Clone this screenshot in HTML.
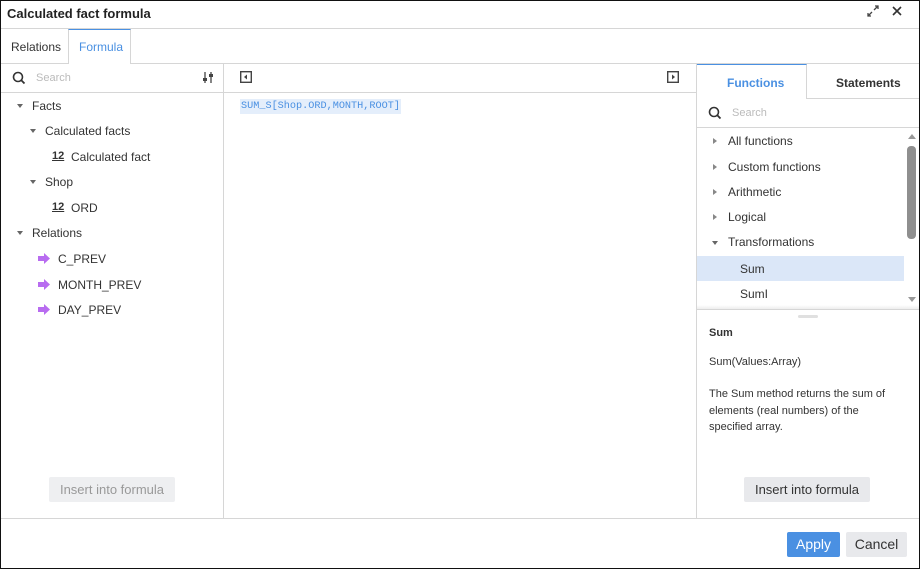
<!DOCTYPE html><html><head><style>
*{box-sizing:border-box;margin:0;padding:0}
body{width:920px;height:569px;font-family:"Liberation Sans",sans-serif;font-size:12px;color:#333;background:#fff;position:relative;overflow:hidden}
.a{position:absolute}
.frame{left:0;top:0;width:920px;height:569px;border:1px solid #111}
.hl{height:1px;background:#d6d6d6}
.vl{width:1px;background:#d6d6d6}
.t{position:absolute;white-space:nowrap}
.tri{position:absolute;width:0;height:0;border-left:3px solid transparent;border-right:3px solid transparent;border-top:4px solid #666}
.trr{position:absolute;width:0;height:0;border-top:3px solid transparent;border-bottom:3px solid transparent;border-left:4px solid #888}
.n12{position:absolute;font-weight:bold;font-size:11px;text-decoration:underline;color:#333}
.btn{position:absolute;background:#e8e9ec;border-radius:2px;text-align:center;font-size:13px}
</style></head><body>
<div class="a frame"></div>
<div class="t" style="left:7px;top:6px;font-size:13px;font-weight:bold;color:#222">Calculated fact formula</div>
<svg class="a" style="left:866px;top:4px" width="14" height="14" viewBox="0 0 14 14"><path d="M8 6L12 2M9 2h3v3M6 8L2 12M2 9v3h3" stroke="#444" stroke-width="1.3" fill="none"/></svg>
<svg class="a" style="left:891px;top:5px" width="12" height="12" viewBox="0 0 12 12"><path d="M2 2L10 10M10 2L2 10" stroke="#333" stroke-width="1.6"/></svg>
<div class="a hl" style="left:1px;top:28px;width:918px"></div>
<div class="t" style="left:11px;top:40px">Relations</div>
<div class="a" style="left:68px;top:29px;width:63px;height:35px;border:1px solid #d6d6d6;border-top:1px solid #4a90e2;border-bottom:none;background:#fff"></div>
<div class="t" style="left:79px;top:40px;color:#4a90e2">Formula</div>
<div class="a hl" style="left:1px;top:63px;width:67px"></div>
<div class="a hl" style="left:131px;top:63px;width:788px"></div>
<svg class="a" style="left:12px;top:71px" width="14" height="14" viewBox="0 0 14 14"><circle cx="6" cy="6" r="4.5" stroke="#333" stroke-width="1.6" fill="none"/><path d="M9.3 9.3L12.5 12.5" stroke="#333" stroke-width="1.8"/></svg>
<div class="t" style="left:36px;top:72px;color:#bbb;font-size:11px">Search</div>
<svg class="a" style="left:202px;top:71px" width="12" height="13" viewBox="0 0 12 13"><path d="M3 1v11M9 1v11" stroke="#444" stroke-width="1.3"/><rect x="1" y="7" width="4" height="3" fill="#444"/><rect x="7" y="3" width="4" height="3" fill="#444"/></svg>
<div class="a hl" style="left:1px;top:92px;width:695px"></div>
<div class="a vl" style="left:223px;top:64px;height:455px"></div>
<div class="tri" style="left:17px;top:104px"></div><div class="t" style="left:32px;top:99px">Facts</div>
<div class="tri" style="left:30px;top:129px"></div><div class="t" style="left:45px;top:124px">Calculated facts</div>
<div class="n12" style="left:52px;top:150px">12</div><div class="t" style="left:71px;top:150px">Calculated fact</div>
<div class="tri" style="left:30px;top:180px"></div><div class="t" style="left:45px;top:175px">Shop</div>
<div class="n12" style="left:52px;top:201px">12</div><div class="t" style="left:71px;top:201px">ORD</div>
<div class="tri" style="left:17px;top:231px"></div><div class="t" style="left:32px;top:226px">Relations</div>
<svg class="a" style="left:38px;top:253px" width="12" height="11" viewBox="0 0 12 11"><path d="M0 3h6V0l6 5.5-6 5.5V8H0z" fill="#b86cf0"/></svg><div class="t" style="left:58px;top:252px">C_PREV</div>
<svg class="a" style="left:38px;top:279px" width="12" height="11" viewBox="0 0 12 11"><path d="M0 3h6V0l6 5.5-6 5.5V8H0z" fill="#b86cf0"/></svg><div class="t" style="left:58px;top:278px">MONTH_PREV</div>
<svg class="a" style="left:38px;top:304px" width="12" height="11" viewBox="0 0 12 11"><path d="M0 3h6V0l6 5.5-6 5.5V8H0z" fill="#b86cf0"/></svg><div class="t" style="left:58px;top:303px">DAY_PREV</div>
<div class="btn" style="left:49px;top:477px;width:126px;height:25px;line-height:25px;color:#999;background:#eeeff1">Insert into formula</div>
<svg class="a" style="left:240px;top:71px" width="12" height="12" viewBox="0 0 12 12"><rect x="0.7" y="0.7" width="10.6" height="10.6" fill="none" stroke="#444" stroke-width="1.4"/><path d="M7 3.5v5L4 6z" fill="#444"/></svg>
<svg class="a" style="left:667px;top:71px" width="12" height="12" viewBox="0 0 12 12"><rect x="0.7" y="0.7" width="10.6" height="10.6" fill="none" stroke="#444" stroke-width="1.4"/><path d="M5 3.5v5L8 6z" fill="#444"/></svg>
<div class="t" style="left:240px;top:99px;height:15px;padding:0 1px;background:#e4eefb;color:#4a90e2;font-family:'Liberation Mono',monospace;font-size:10.2px;line-height:15px">SUM_S[Shop.ORD,MONTH,ROOT]</div>
<div class="a vl" style="left:696px;top:64px;height:455px"></div>
<div class="a" style="left:697px;top:64px;width:110px;height:35px;border-top:1px solid #4a90e2;border-right:1px solid #d6d6d6"></div>
<div class="t" style="left:727px;top:76px;color:#4a90e2;font-weight:bold;font-size:12px">Functions</div>
<div class="t" style="left:836px;top:76px;font-weight:bold;font-size:12px">Statements</div>
<div class="a hl" style="left:807px;top:98px;width:112px"></div>
<svg class="a" style="left:708px;top:106px" width="14" height="14" viewBox="0 0 14 14"><circle cx="6" cy="6" r="4.5" stroke="#333" stroke-width="1.6" fill="none"/><path d="M9.3 9.3L12.5 12.5" stroke="#333" stroke-width="1.8"/></svg>
<div class="t" style="left:732px;top:107px;color:#bbb;font-size:11px">Search</div>
<div class="a hl" style="left:697px;top:127px;width:222px"></div>
<div class="trr" style="left:713px;top:138px"></div><div class="t" style="left:728px;top:134px">All functions</div>
<div class="trr" style="left:713px;top:164px"></div><div class="t" style="left:728px;top:160px">Custom functions</div>
<div class="trr" style="left:713px;top:189px"></div><div class="t" style="left:728px;top:185px">Arithmetic</div>
<div class="trr" style="left:713px;top:214px"></div><div class="t" style="left:728px;top:210px">Logical</div>
<div class="tri" style="left:712px;top:241px"></div><div class="t" style="left:728px;top:235px">Transformations</div>
<div class="a" style="left:697px;top:256px;width:207px;height:25px;background:#dbe7f8"></div>
<div class="t" style="left:740px;top:262px">Sum</div>
<div class="t" style="left:740px;top:287px">SumI</div>
<div class="a" style="left:908px;top:134px;border-left:4px solid transparent;border-right:4px solid transparent;border-bottom:5px solid #999"></div>
<div class="a" style="left:907px;top:146px;width:9px;height:93px;background:#8f8f8f;border-radius:4px"></div>
<div class="a" style="left:908px;top:297px;border-left:4px solid transparent;border-right:4px solid transparent;border-top:5px solid #999"></div>
<div class="a" style="left:697px;top:305px;width:222px;height:4px;background:linear-gradient(#fff,#eee)"></div>
<div class="a hl" style="left:697px;top:309px;width:222px"></div>
<div class="a" style="left:798px;top:315px;width:20px;height:3px;background:#e0e0e0;border-radius:2px"></div>
<div class="t" style="left:709px;top:327px;font-weight:bold;font-size:11px">Sum</div>
<div class="t" style="left:709px;top:356px;font-size:11px">Sum(Values:Array)</div>
<div class="a" style="left:709px;top:386px;width:190px;font-size:11px;line-height:16.5px">The Sum method returns the sum of elements (real numbers) of the specified array.</div>
<div class="btn" style="left:744px;top:477px;width:126px;height:25px;line-height:25px;color:#333">Insert into formula</div>
<div class="a hl" style="left:1px;top:518px;width:918px"></div>
<div class="btn" style="left:787px;top:532px;width:53px;height:25px;line-height:25px;background:#4a90e2;color:#fff;font-size:14px">Apply</div>
<div class="btn" style="left:846px;top:532px;width:61px;height:25px;line-height:25px;font-size:14px">Cancel</div>
</body></html>
